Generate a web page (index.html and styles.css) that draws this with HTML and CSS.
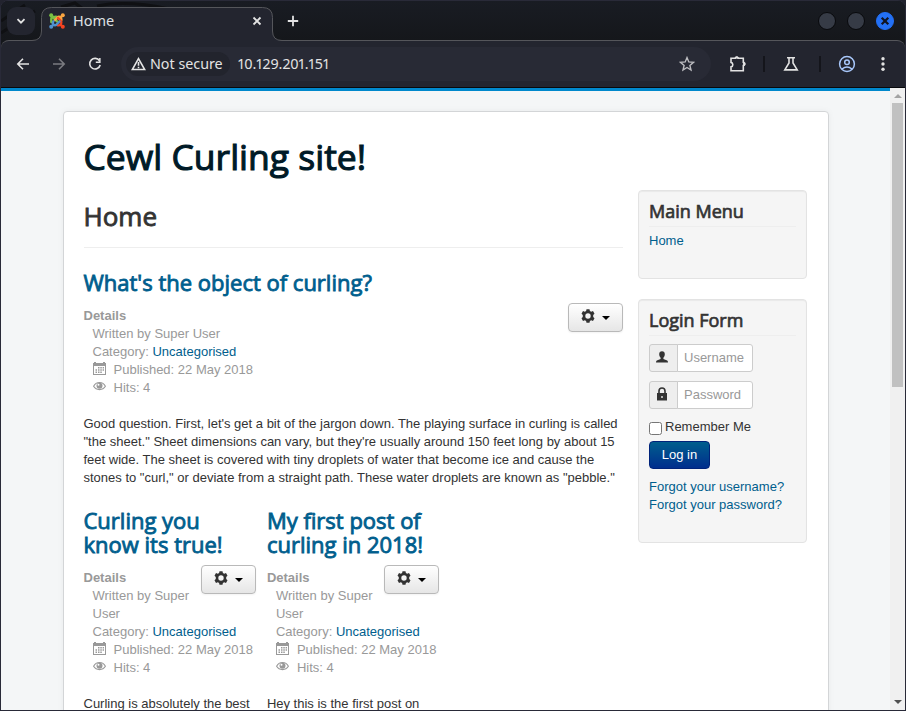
FILE: index.html
```html
<!DOCTYPE html>
<html lang="en">
<head>
<meta charset="utf-8">
<title>Home</title>
<link rel="stylesheet" href="styles.css">
</head>
<body>
<svg class="defs" width="0" height="0">
  <symbol id="gear" viewBox="0 0 14 14"><path fill-rule="evenodd" d="M5.500.3h3l.4 1.700 1.300.7 1.800-.6 1.500 2.600L12.200 6v2l1.300 1.300-1.500 2.600-1.800-.6-1.300.7-.4 1.700h-3l-.4-1.700-1.300-.7-1.800.6L.5 9.300 1.800 8V6L.5 4.700 2 2.100l1.800.6L5.100 2zM7 4.300a2.700 2.700 0 1 0 0 5.400 2.700 2.700 0 0 0 0-5.400z"/></symbol>
  <symbol id="calendar" viewBox="0 0 13 13"><path fill-rule="evenodd" d="M0 1h1V0h2v1h7V0h2v1h1v12H0zM1 4v8h11V4z"/><path d="M5 5h1.500v1.500H5zM7.300 5h1.500v1.500H7.300zM9.600 5h1.400v1.500H9.600zM2.500 7.300H4v1.400H2.500zM5 7.300h1.500v1.400H5zM7.300 7.300h1.500v1.400H7.300zM9.600 7.300H11v1.400H9.600zM2.500 9.600H4V11H2.500zM5 9.600h1.500V11H5zM7.300 9.600h1.500V11H7.300z"/></symbol>
  <symbol id="eye" viewBox="0 0 13 10"><path d="M.6 5.300C3.200.300 9.800.300 12.400 5.300 9.800 9.700 3.200 9.700.6 5.300z" fill="none" stroke="currentColor" stroke-width="1.100"/><circle cx="6.500" cy="4.700" r="3"/><circle cx="5.500" cy="3.700" r="1" fill="#fff"/></symbol>
</svg>
<div class="window">
  <div class="tabstrip">
    <svg class="strip-art" width="180" height="40" viewBox="0 0 180 40"><path d="M0 32 34 10M0 20 24 4M60 6 74 2l8 6M96 5q30-6 72 3" fill="none" stroke="#0f1013" stroke-width="3"/></svg>
    <div class="tab-search"><svg width="12" height="12" viewBox="0 0 12 12"><path d="M2.500 4.200 6 7.700l3.500-3.500" class="line bold"/></svg></div>
    <div class="tab">
      <svg class="tab-shape" width="252" height="35" viewBox="0 0 252 35"><path d="M1 33.500Q10.500 33.500 10.500 24V10.500Q10.500.5 20.500.5h211Q241.500.5 241.500 10.500V24Q241.500 33.500 251 33.500V35H1z" fill="#23252f"/><path d="M1 33.500Q10.500 33.500 10.500 24V10.500Q10.500.5 20.500.5h211Q241.500.5 241.500 10.500V24Q241.500 33.500 251 33.500" fill="none" stroke="#55565b"/></svg>
      <svg class="favicon" width="16" height="16" viewBox="0 0 16 16">
        <g fill="none" stroke-width="2.400" stroke-linecap="round">
          <path stroke="#7ac143" d="M2.300 9V5.800Q2.300 4 4 4.400L8 8.400M2 2l2.500 2.500Q7 3 8.500 4.500l2 2"/>
          <path stroke="#f9a541" d="M14 2l-2.500 2.500Q10 3 8.600 4.300L6 7M11.500 4.500Q13 6 12 8"/>
          <path stroke="#f44321" d="M14 14l-2.500-2.500Q13 9 11.500 7.500L9 5M11.500 11.500Q10 13 8 12"/>
          <path stroke="#5091cd" d="M2 14l2.500-2.500Q6 13 7.500 11.500L10.500 8.500M4.500 11.500Q3 10 4.500 8.300"/>
        </g>
        <g><circle cx="2.200" cy="2.200" r="2" fill="#7ac143"/><circle cx="13.800" cy="2.200" r="2" fill="#f9a541"/><circle cx="13.800" cy="13.800" r="2" fill="#f44321"/><circle cx="2.200" cy="13.800" r="2" fill="#5091cd"/></g>
      </svg>
      <span class="tab-title">Home</span>
      <svg class="tab-close" width="10" height="10" viewBox="0 0 10 10"><path d="M1.500 1.500l7 7m0-7l-7 7" class="line bold"/></svg>
    </div>
    <svg class="new-tab" width="12" height="12" viewBox="0 0 12 12"><path d="M6 .8v10.400M.8 6h10.400" class="line bold"/></svg>
    <div class="controls">
      <i></i><i></i>
      <i class="close"><svg width="10" height="10" viewBox="0 0 10 10"><path d="M1.700 1.700l6.600 6.600m0-6.600L1.700 8.300" stroke="#101422" stroke-width="2.200"/></svg></i>
    </div>
  </div>
  <div class="toolbar">
    <svg class="nav" width="14" height="14" viewBox="0 0 14 14"><path d="M13 7H2m5-5.200L1.800 7 7 12.200" class="line"/></svg>
    <svg class="nav dim" width="14" height="14" viewBox="0 0 14 14"><path d="M1 7h11M7 1.800 12.200 7 7 12.200" class="line"/></svg>
    <svg class="nav" width="14" height="14" viewBox="0 0 14 14"><path d="M11.500 3.800A5.300 5.300 0 1 0 12.200 8" class="line"/><path d="M12.600 1v5H7.800V4.600h3.300V1z" fill="#e3e3e3"/></svg>
    <div class="omnibox">
      <div class="chip"><svg width="15" height="14" viewBox="0 0 15 14"><path d="M7.500 1.700 13.700 12.500H1.300z" class="line"/><path d="M7.500 5v3.700M7.500 9.700v1.500" class="line"/></svg><span>Not secure</span></div>
      <span class="address">10.129.201.151</span>
      <svg class="star" width="16" height="16" viewBox="0 0 16 16"><path d="M8 1.600l1.800 4.300 4.700.4-3.600 3.100 1.100 4.600L8 11.500 4 14l1.100-4.600L1.500 6.300l4.700-.4z" fill="none" stroke="#bcbcc0" stroke-width="1.400"/></svg>
    </div>
    <svg class="puzzle" width="18" height="18" viewBox="0 0 18 18"><path d="M2 3.300h4.300a1.500 1.500 0 0 1 2.900 0h5.100v4.200a1.500 1.500 0 0 1 0 2.900v5.400H2v-3.900a2.300 2.300 0 0 0 0-4.500z" class="line"/><path d="M6 3.200a1.700 1.700 0 0 1 3.500 0zM14.500 7a1.900 1.900 0 0 1 0 3.800z" fill="#e3e3e3" stroke="#e3e3e3" stroke-width=".6"/></svg>
    <b class="sep"></b>
    <svg class="flask" width="16" height="16" viewBox="0 0 16 16"><path d="M4 1.700h8M6 2v5l-4.200 6.900h12.400L10 7V2" class="line"/></svg>
    <b class="sep wide"></b>
    <svg class="profile" width="18" height="18" viewBox="0 0 18 18" fill="none" stroke="#a8c7fa" stroke-width="1.500"><circle cx="9" cy="9" r="7.400"/><circle cx="9" cy="7.200" r="2.300"/><path d="M4 14q5-3.800 10 0"/></svg>
    <svg class="more" width="4" height="16" viewBox="0 0 4 16" fill="#e3e3e3"><circle cx="2" cy="2.800" r="1.700"/><circle cx="2" cy="8" r="1.700"/><circle cx="2" cy="13.200" r="1.700"/></svg>
  </div>
  <div class="viewport">
    <div class="page">
      <div class="card">
        <header class="site-title">Cewl Curling site!</header>
        <div class="columns">
          <main>
            <div class="page-header"><h2>Home</h2></div>
            <article class="item">
              <h2><a>What's the object of curling?</a></h2>
              <button class="btn"><svg width="14" height="14"><use href="#gear"/></svg><i class="caret"></i></button>
              <dl>
                <dt>Details</dt>
                <dd>Written by Super User</dd>
                <dd>Category: <a>Uncategorised</a></dd>
                <dd><svg class="ico" width="13" height="13"><use href="#calendar"/></svg>Published: 22 May 2018</dd>
                <dd><svg class="ico eye" width="13" height="10"><use href="#eye"/></svg>Hits: 4</dd>
              </dl>
              <p>Good question. First, let's get a bit of the jargon down. The playing surface in curling is called "the sheet." Sheet dimensions can vary, but they're usually around 150 feet long by about 15 feet wide. The sheet is covered with tiny droplets of water that become ice and cause the stones to "curl," or deviate from a straight path. These water droplets are known as "pebble."</p>
            </article>
            <div class="items-row">
              <article class="item">
                <h2><a>Curling you know its true!</a></h2>
                <button class="btn"><svg width="14" height="14"><use href="#gear"/></svg><i class="caret"></i></button>
                <dl>
                  <dt>Details</dt>
                  <dd>Written by Super User</dd>
                  <dd>Category: <a>Uncategorised</a></dd>
                  <dd><svg class="ico" width="13" height="13"><use href="#calendar"/></svg>Published: 22 May 2018</dd>
                  <dd><svg class="ico eye" width="13" height="10"><use href="#eye"/></svg>Hits: 4</dd>
                </dl>
                <p>Curling is absolutely the best</p>
              </article>
              <article class="item">
                <h2><a>My first post of curling in 2018!</a></h2>
                <button class="btn"><svg width="14" height="14"><use href="#gear"/></svg><i class="caret"></i></button>
                <dl>
                  <dt>Details</dt>
                  <dd>Written by Super User</dd>
                  <dd>Category: <a>Uncategorised</a></dd>
                  <dd><svg class="ico" width="13" height="13"><use href="#calendar"/></svg>Published: 22 May 2018</dd>
                  <dd><svg class="ico eye" width="13" height="10"><use href="#eye"/></svg>Hits: 4</dd>
                </dl>
                <p>Hey this is the first post on</p>
              </article>
            </div>
          </main>
          <aside>
            <section class="well menu">
              <h3>Main Menu</h3>
              <a>Home</a>
            </section>
            <section class="well login">
              <h3>Login Form</h3>
              <div class="field"><span><svg width="12" height="12" viewBox="0 0 12 12"><path d="M6 .3c1.800 0 2.900 1.200 2.800 3 0 1.500-.6 2.700-1.400 3.500v1.300l3.800 1.500q.8.500.8 1.900H0q0-1.400.8-1.900l3.800-1.500V6.800C3.800 6 3.200 4.800 3.200 3.300 3.100 1.500 4.200.3 6 .3z"/></svg></span><input type="text" placeholder="Username"></div>
              <div class="field"><span><svg class="lock" width="12" height="14" viewBox="0 0 12 14"><path d="M3 6.500V4a3 3 0 0 1 6 0v2.500" fill="none" stroke="#333" stroke-width="1.600"/><path fill-rule="evenodd" d="M1 6h10v7.500H1zM5.300 9v2h1.400V9z"/></svg></span><input type="text" placeholder="Password"></div>
              <label class="remember"><input type="checkbox">Remember Me</label>
              <button class="btn-primary">Log in</button>
              <div class="links"><a>Forgot your username?</a><a>Forgot your password?</a></div>
            </section>
          </aside>
        </div>
      </div>
    </div>
    <div class="scrollbar"><i class="up"></i><i class="thumb"></i><i class="down"></i></div>
  </div>
</div>
</body>
</html>
```
FILE: styles.css
```css
* { box-sizing: border-box; }
body { margin: 0; background: #22232e; font: 13px/18px "Liberation Sans", Arial, sans-serif; color: #333; }
svg { display: block; flex: none; }
.defs { position: absolute; }
h2, h3, p, dl, dd { margin: 0; }
a { color: #005e8d; text-decoration: none; }
i { display: block; }

.window { width: 906px; height: 711px; border: 1px solid #292a38; border-radius: 8px 8px 0 0; overflow: hidden; display: flex; flex-direction: column; background: #15171b; }
.line { fill: none; stroke: #e3e3e3; stroke-width: 1.6; }
.bold { stroke-width: 1.8; }

.tabstrip { height: 39px; flex: none; display: flex; align-items: flex-start; background: linear-gradient(#191c23, #15171b); font: 14.5px/20px "Noto Sans", sans-serif; color: #dfe0e3; position: relative; }
.strip-art { position: absolute; left: 0; top: 0; }
.tab-search { width: 28px; height: 28px; margin: 6px 0 0 6px; border-radius: 9px; background: #23252f; display: grid; place-items: center; position: relative; }
.tab { width: 233px; height: 34px; margin: 6px 0 0 6px; padding: 0 12px 6px 8px; display: flex; align-items: center; position: relative; z-index: 1; }
.tab > * { position: relative; }
.tab .tab-shape { position: absolute; left: -10px; top: 0; }
.tab-title { margin: -2px 0 0 8px; flex: 1; }
.new-tab { margin: 14px 0 0 13px; }
.controls { margin: 11px 11px 0 auto; display: flex; gap: 11px; }
.controls i { width: 18px; height: 18px; border-radius: 50%; background: #363b46; border: 1px solid #08090c; display: grid; place-items: center; }
.controls .close { background: #2370f5; border-color: #2370f5; }

.toolbar { height: 48px; flex: none; display: flex; align-items: center; padding: 0 20px 2px 15px; background: #23252f; border-top: 1px solid #55565b; border-radius: 8px 8px 0 0; box-shadow: inset 0 -1px #08090c; font: 14.3px/20px "Noto Sans", sans-serif; color: #e3e3e3; }
.nav { margin-right: 22px; }
.dim { opacity: .45; }
.omnibox { width: 590px; height: 34px; border-radius: 17px; background: #282a35; margin-left: -3px; padding: 0 16px 0 5px; display: flex; align-items: center; }
.chip { width: 104px; height: 24px; border-radius: 12px; background: #22242d; display: flex; align-items: center; gap: 4px; padding-left: 5px; white-space: nowrap; }
.address { margin-left: 8px; flex: 1; font-variant-numeric: proportional-nums; letter-spacing: -.05px; }
.puzzle { margin-left: 18px; }
.sep { width: 2px; height: 16px; background: #14151b; margin-left: 16px; }
.flask { margin-left: 18px; }
.wide { margin-left: 20px; }
.profile { margin-left: 17px; }
.more { margin-left: 25px; }

.viewport { flex: 1; min-height: 0; display: flex; }
.page { flex: 1; overflow: hidden; background: #f4f6f7; border-top: 3px solid #0088cc; padding: 20px 61px 0 62px; }
.card { height: 640px; background: #fff; border: 1px solid #d3d5d7; border-radius: 4px; padding: 20px 21px 20px 19.5px; box-shadow: 0 0 6px rgba(0,0,0,.05); }
.site-title { height: 58px; font: 35.5px/48px "Open Sans", sans-serif; color: #001a27; -webkit-text-stroke: 1.1px #001a27; }
.columns { display: flex; justify-content: space-between; }
main { width: 539.5px; }
.page-header { padding: 6px 0 11px; border-bottom: 1px solid #eee; margin-bottom: 23px; }
h2, h3 { font-family: "Open Sans", sans-serif; font-weight: 400; -webkit-text-stroke: .85px; }
.page-header h2 { font-size: 26px; line-height: 40px; }
.item h2 { font-size: 22px; line-height: 24px; margin: -1px 0 13px; }
.item dl { color: #999; }
dt { font-weight: bold; }
dd { padding-left: 9px; }
.item p { margin-top: 18px; }
.ico { display: inline-block; vertical-align: -1px; margin-right: 8px; fill: #999; color: #999; }
.eye { vertical-align: 1px; }
.btn { float: right; width: 55px; height: 29px; margin: -4px 0 0; padding: 0 12px; display: flex; align-items: center; gap: 7px; border: 1px solid #b9b9b9; border-radius: 4px; background: linear-gradient(#fff, #e6e6e6); fill: #333; box-shadow: 0 1px 2px rgba(0,0,0,.05); }
.btn svg { margin-top: -4px; }
.caret { border: solid transparent; border-width: 4px 4px 0; border-top-color: #000; }
.items-row { display: flex; gap: 11.3px; margin-top: 22px; }
.items-row .item { width: 172.1px; }

aside { width: 169px; }
.well { background: #f5f5f5; border: 1px solid #e3e3e3; border-radius: 4px; padding: 10px; margin-bottom: 20px; box-shadow: inset 0 1px 1px rgba(0,0,0,.05); }
.menu { height: 89px; }
.login { height: 244px; }
h3 { font-size: 18px; line-height: 20px; height: 26px; border-bottom: 1px solid #eee; margin-bottom: 5px; -webkit-text-stroke: .7px; }
.login h3 { margin-bottom: 8px; }
.field { display: flex; width: 104px; height: 28px; margin-bottom: 9px; }
.field span { width: 29px; flex: none; border: 1px solid #ccc; border-radius: 3px 0 0 3px; background: #eee; display: flex; justify-content: center; padding: 6px 3px 0 0; fill: #333; }
.lock { margin-top: -1px; }
.field input { width: 76px; margin-left: -1px; border: 1px solid #ccc; border-radius: 0 3px 3px 0; padding: 0 6px; font: inherit; background: #fff; }
.field input::placeholder { color: #999; }
.remember { display: flex; height: 23px; gap: 3px; }
.remember input { width: 13px; height: 13px; margin: 4px 0 0; }
.btn-primary { display: block; width: 61px; height: 28px; border: 1px solid #00237a; border-radius: 4px; background: linear-gradient(#005e8d, #002e8d); color: #fff; font: inherit; padding: 0; }
.links { display: grid; margin-top: 9px; }

.scrollbar { width: 15px; background: #f0f0f0; display: flex; flex-direction: column; align-items: center; }
.up { margin-top: 6px; border: solid transparent; border-width: 0 4px 4px; border-bottom-color: #a3a3a3; }
.thumb { width: 11px; height: 284px; margin-top: 5px; background: #c1c1c1; }
.down { margin: auto 0 6px; border: solid transparent; border-width: 4px 4px 0; border-top-color: #505050; }
```
